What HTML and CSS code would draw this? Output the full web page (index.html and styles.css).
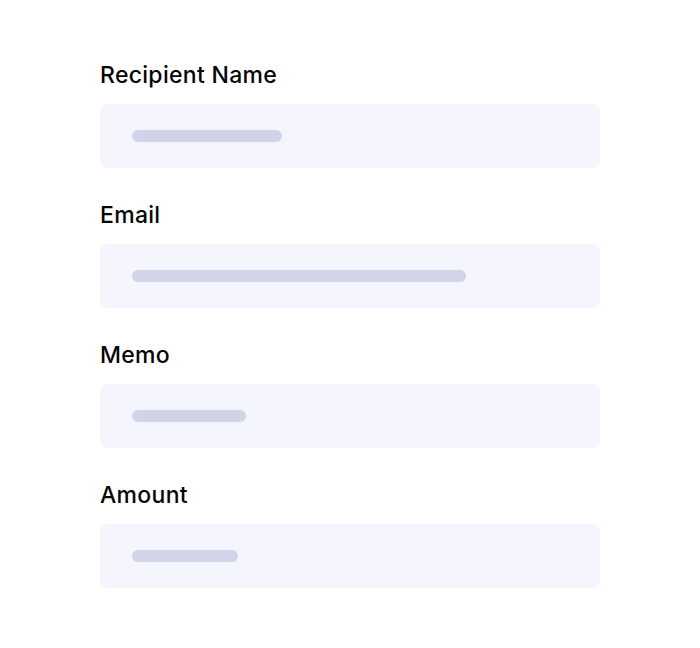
FILE: index.html
```html
<!DOCTYPE html>
<html>
<head>
<meta charset="utf-8">
<link rel="stylesheet" href="styles.css">
</head>
<body>
<form class="form">
  <div class="field">
    <label class="label">Recipient Name</label>
    <div class="input"><span class="bar" style="width:150px"></span></div>
  </div>
  <div class="field">
    <label class="label">Email</label>
    <div class="input"><span class="bar" style="width:334px"></span></div>
  </div>
  <div class="field">
    <label class="label">Memo</label>
    <div class="input"><span class="bar" style="width:114px"></span></div>
  </div>
  <div class="field">
    <label class="label">Amount</label>
    <div class="input"><span class="bar" style="width:106px"></span></div>
  </div>
</form>
</body>
</html>
```
FILE: styles.css
```css
html, body {
  margin: 0;
  background: #ffffff;
}
.form {
  width: 500px;
  margin: 0 0 0 100px;
  padding-top: 63px;
  display: flex;
  flex-direction: column;
  gap: 35px;
}
.field {
  display: flex;
  flex-direction: column;
}
.label {
  font-family: Inter, "Liberation Sans", sans-serif;
  font-weight: 550;
  font-size: 23px;
  letter-spacing: 0.3px;
  line-height: 24px;
  color: #050505;
  margin-bottom: 17px;
}
.input {
  height: 64px;
  background: #f5f5fe;
  border-radius: 8px;
  display: flex;
  align-items: center;
  padding-left: 32px;
}
.bar {
  display: block;
  height: 12px;
  border-radius: 6px;
  background: #d1d3e8;
}
```
